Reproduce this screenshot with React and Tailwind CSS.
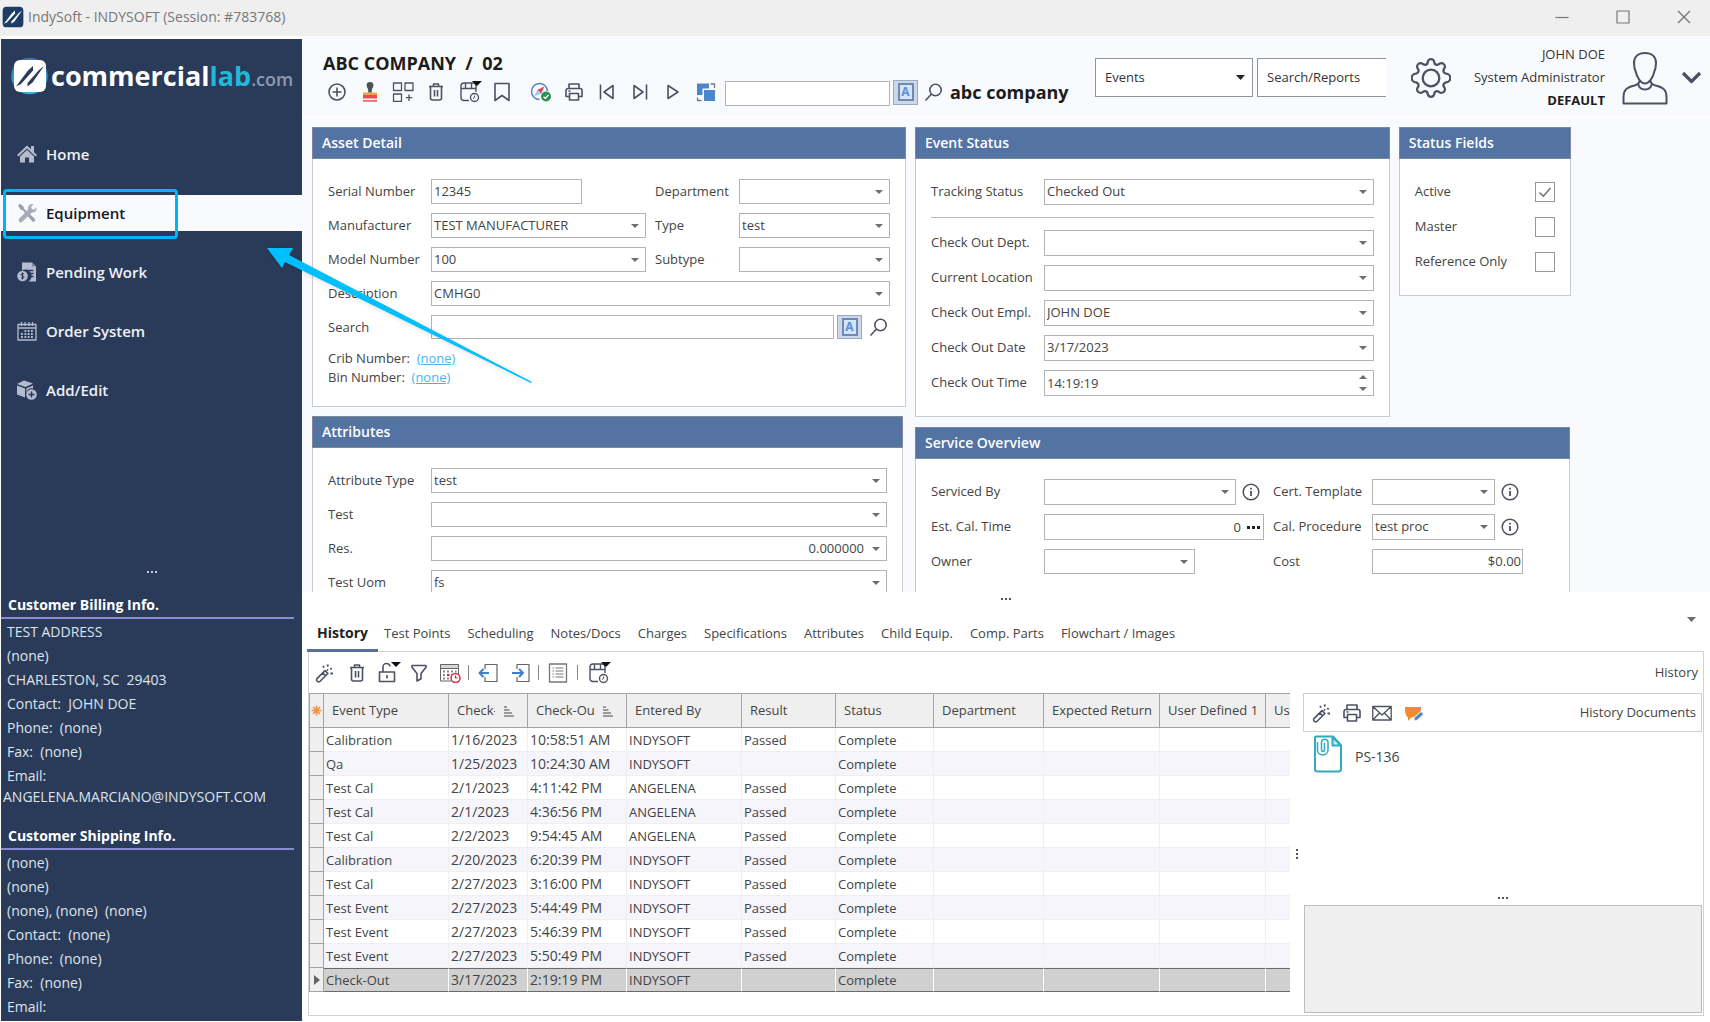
import React from "react";

const LINE = "#4e5064";

/* ---------- icons ---------- */

function Svg({ w = 20, h = w, vb, className = "", children, stroke = LINE, sw = 1.6 }) {
  return (
    <svg
      width={w}
      height={h}
      viewBox={vb || `0 0 ${w} ${h}`}
      className={`shrink-0 ${className}`}
      fill="none"
      stroke={stroke}
      strokeWidth={sw}
      strokeLinejoin="round"
      aria-hidden="true"
    >
      {children}
    </svg>
  );
}

const PlusCircleIcon = () => (
  <Svg>
    <circle cx="10" cy="10" r="8" />
    <path d="M10 5.500v9M5.500 10h9" />
  </Svg>
);

const StampIcon = () => (
  <Svg stroke="none">
    <path d="M10 0a3.400 3.400 0 0 1 3.400 3.600c0 2-1.600 2.800-1.600 4.600v2.600H8.200V8.200c0-1.800-1.600-2.600-1.600-4.600A3.400 3.400 0 0 1 10 0Z" fill="#4a5358" />
    <path d="M3 10.500h14v3.500H3z" fill="#f7a14b" />
    <path d="M3 13h14v3.500H3z" fill="#ee4a52" />
    <path d="M3 18.200h14v1.500H3z" fill="#ee4a52" />
  </Svg>
);

const GridPlusIcon = () => (
  <Svg w={22} h={20} sw={1.3}>
    <path d="M1.500 1h8v7.500h-8zM13 1h8v7.500h-8zM1.500 12h8v7.500h-8zM17 12.500v6.500M13.800 15.700h6.500" />
  </Svg>
);

const TrashIcon = () => (
  <Svg>
    <path d="M3 4.500h14M7.500 4.500V2h5v2.500" />
    <path d="M4.500 4.500V16a2 2 0 0 0 2 2h7a2 2 0 0 0 2-2V4.500M8.500 8v6.500M11.500 8v6.500" />
  </Svg>
);

const BoxClockIcon = () => (
  <Svg w={24} h={22} sw={1.4}>
    <path d="M11 19.500H6a3 3 0 0 1-3-3V5a3 3 0 0 1 3-3h9a3 3 0 0 1 3 3v6" />
    <path d="M3 7.500h15M7.500 2v5.500M13.500 2v5.500" />
    <circle cx="16.500" cy="16.500" r="4" />
    <path d="M16.700 14.500l-.2 2.200-1.500.8" strokeWidth="1" />
    <path d="M14 0h10l-5 5z" fill="#111" stroke="none" />
  </Svg>
);

const BookmarkIcon = () => (
  <Svg>
    <path d="M3 1.500h14v17l-7-5-7 5z" />
  </Svg>
);

const CompassIcon = () => (
  <Svg w={22} h={20}>
    <path d="M9.500 17.500A8 8 0 1 1 17.500 9" stroke="#4c86cf" strokeWidth="1.500" />
    <path d="M13.800 5L7.800 8l3.200 3.200z" fill="#e24040" stroke="#e24040" strokeWidth=".6" />
    <path d="M5.300 13.300L7.800 8l3.200 3.200z" fill="#b9cfe8" stroke="#6e9ad0" strokeWidth=".6" />
    <circle cx="16" cy="14.500" r="5" fill="#2e9150" stroke="none" />
    <path d="M13.600 14.700l1.800 1.700 3.100-3.500" stroke="#fff" strokeWidth="1.400" />
  </Svg>
);

const PrinterIcon = () => (
  <Svg>
    <path d="M5 6.500V2h10v4.500" />
    <path d="M5 14.500H2V8.500a2 2 0 0 1 2-2h12a2 2 0 0 1 2 2v6h-3" />
    <path d="M5.500 11.500h9V18h-9zM4.500 9h2" />
  </Svg>
);

const FirstIcon = () => (
  <Svg>
    <path d="M3.500 2.500v15M16 3.500v13L7 10z" />
  </Svg>
);
const LastIcon = () => (
  <Svg>
    <path d="M16.500 2.500v15M4 3.500v13l9-6.500z" />
  </Svg>
);
const PlayIcon = () => (
  <Svg>
    <path d="M5 3.500v13l10-6.500z" />
  </Svg>
);

const CopyIcon = () => (
  <Svg stroke="none">
    <path d="M1 1.500h12v5H6.500v6.500H1z" fill="#4a86cc" />
    <path d="M8 8h11v11H8z" fill="#4a86cc" />
    <path d="M14.500 2h4v4M1.500 15.500v3h4" stroke="#777" strokeWidth="1.300" />
  </Svg>
);

const LookupIcon = () => (
  <Svg>
    <circle cx="11.500" cy="8" r="5.700" />
    <path d="M7.500 12L1.500 18.500" />
  </Svg>
);

const WandIcon = () => (
  <Svg>
    <path d="M2.200 15.400L10 7.600l2.900 2.900-7.800 7.800a2 2 0 0 1-2.900-2.900zM7.700 9.900l2.900 2.900" />
    <path d="M9 4.500L8 3M13 3.500l-.5-2M15.500 6.500l1-1.500M15.500 10.500h2.500M12 6.500l1 1" strokeWidth="1.900" />
  </Svg>
);

const LockIcon = () => (
  <Svg w={24} h={22}>
    <path d="M2.500 10h15v9.500h-15zM6 10V5.500a3.500 3.500 0 0 1 7-1M10 13v3.500" />
    <path d="M14 0h10l-5 5z" fill="#111" stroke="none" />
  </Svg>
);

const FilterIcon = () => (
  <Svg>
    <path d="M3 2.500h14v1.800L12 10.500v5.300l-4 2.200v-7.500L3 4.300z" />
  </Svg>
);

const CalendarClockIcon = () => (
  <Svg w={22} h={20} stroke="#666" sw={1}>
    <path d="M1.500 18V1.500h18V11M1.500 18H12M1.500 5.500h18" />
    <path d="M1.500 1.500h18v4h-18z" fill="#d6d6d6" />
    <path d="M4 8.500h2M8 8.500h2M12 8.500h2M16 8.500h1.500M4 12h2M12 12h1M4 15.500h2M8 15.500h2" stroke="#888" strokeWidth="1.800" />
    <path d="M8 12h2.500" stroke="#d22b45" strokeWidth="2.200" />
    <circle cx="16.500" cy="15" r="4.500" fill="#fff" stroke="#d22b45" strokeWidth="1.500" />
    <path d="M16.500 12.500V15h2" stroke="#d22b45" strokeWidth="1.200" />
  </Svg>
);

const PageLeftIcon = () => (
  <Svg stroke="#666" sw={1.2}>
    <path d="M7 6V1.500h12v17H7V14" />
    <path d="M11 10H1.500M5.500 6L1.500 10l4 4" stroke="#3c7fcc" strokeWidth="2" />
  </Svg>
);
const PageRightIcon = () => (
  <Svg stroke="#666" sw={1.2}>
    <path d="M6 6V1.500h12v17H6V14" />
    <path d="M1 10h10.500M8 6l4 4-4 4" stroke="#3c7fcc" strokeWidth="2" />
  </Svg>
);
const ListIcon = () => (
  <Svg stroke="#777" sw={1.3}>
    <path d="M1.500 1h17v18h-17z" />
    <path d="M4.500 5h1.500M4.500 8h1.500M4.500 11h1.500M4.500 14h1.500M7.500 5H15.500M7.500 8H15.500M7.500 11H15.500M7.500 14H15.500" strokeWidth="1" />
  </Svg>
);

const MailIcon = () => (
  <Svg w={20} h={20} sw={1.3}>
    <path d="M.8 3.500h18.400v13.500H.8zM.8 3.500l9.200 8.500 9.200-8.500M.8 17l6.700-7M19.200 17l-6.700-7" />
  </Svg>
);

const NoteEditIcon = () => (
  <Svg stroke="none">
    <path d="M1 4h16v4l-7 6H8l-4 4v-4H3L1 9z" fill="#f28c28" />
    <path d="M10.500 14.500l6.500-6 2.500 2.700-6.500 6-3 .5z" fill="#4a86cc" stroke="#fff" strokeWidth=".7" />
  </Svg>
);

const InfoIcon = () => (
  <Svg w={18}>
    <circle cx="9" cy="9" r="7.800" strokeWidth="1.500" />
    <path d="M9 8v5M9 4.800v1.700" strokeWidth="1.800" />
  </Svg>
);

const SortIcon = () => (
  <Svg w={12} stroke="#808080" sw={1.5}>
    <path d="M1 2h3M1 5h5.500M1 8h8M1 11h10" />
  </Svg>
);

const StarIcon = () => (
  <Svg w={11} stroke="#ef9440" sw={1.6}>
    <path d="M5.500.5v10M.5 5.500h10M2 2l7 7M9 2l-7 7" />
    <circle cx="5.500" cy="5.500" r="2.300" fill="#ef9440" stroke="none" />
  </Svg>
);

const AttachmentDocIcon = () => (
  <Svg w={30} h={38} stroke="#2fabbd" sw={2}>
    <path d="M3 1.500h17l8 9V34a2.500 2.500 0 0 1-2.500 2.500h-21A2.500 2.500 0 0 1 2 34V3a1.500 1.500 0 0 1 1-1.500z" />
    <path d="M19.500 2v8.500H28z" fill="#c4ecf2" />
    <path d="M4.500 7v8c0 6.500 10.500 6.500 10.500 0V7.500c0-4.500-6.500-4.500-6.500 0v7c0 2.500 3 2.500 3 0V8" strokeWidth="1.500" />
  </Svg>
);

const GearIcon = () => (
  <Svg w={40} h={40} vb="0 0 40 40" sw={2.3}>
    <circle cx="20" cy="20" r="8.300" />
    <path d="M16.700 4.500a3.300 3.300 0 0 1 6.600 0c.3 2.200 2.500 3 4.500 1.800a3.300 3.300 0 0 1 5.200 4.600c-1.200 2-.3 4.200 2 4.800a3.300 3.300 0 0 1 0 8.600c-2.300.6-3.200 2.800-2 4.800a3.300 3.300 0 0 1-5.200 4.600c-2-1.200-4.200-.4-4.500 1.800a3.300 3.300 0 0 1-6.600 0c-.3-2.200-2.500-3-4.500-1.800a3.300 3.300 0 0 1-5.200-4.600c1.200-2 .3-4.200-2-4.800a3.300 3.300 0 0 1 0-8.600c2.300-.6 3.200-2.800 2-4.800a3.300 3.300 0 0 1 5.200-4.600c2 1.200 4.200.4 4.500-1.800z" />
  </Svg>
);

const PersonIcon = () => (
  <Svg w={46} h={54} sw={2}>
    <path d="M23 2c7 0 11 4 11 10 0 1-.3 2-.3 3 0 2-.2 3-1.200 5-1.500 7-5.500 12.500-9.500 12.500S15 27 13.500 20c-1-2-1.200-3-1.200-5 0-1-.3-2-.3-3C12 6 16 2 23 2z" />
    <path d="M17.500 29.500c0 3-1.500 4-5 5C4.500 36.500 1.500 39 1.500 46v6.500h43V46c0-7-3-9.500-11-11.500-3.500-1-5-2-5-5" />
    <path d="M16 32.500c1 4.500 4 6 7 6s6-1.500 7-6" />
  </Svg>
);

function LogoMark({ size, bg, fg, halo = false }) {
  return (
    <svg width={size} height={size} viewBox="0 0 34 34" className="shrink-0 overflow-visible" aria-hidden="true">
      {halo && (
        <>
          <defs>
            <linearGradient id="halo" x1="0" y1="0" x2="0" y2="1">
              <stop offset="0" stopColor="#3d6fb5" />
              <stop offset="1" stopColor="#2bb6dc" />
            </linearGradient>
          </defs>
          <circle cx="16.500" cy="17" r="18.300" fill="url(#halo)" />
        </>
      )}
      <rect x="1" y="1" width="32" height="32" rx="6" fill={bg} />
      <path d="M3 27.500L15 11.500L20 7V11.500L8 25Z" fill={fg} />
      <path d="M14.500 27.500V24L26 11L31 7L19.500 23.500Z" fill={fg} />
    </svg>
  );
}

const NAV_GRAY = "#b4bccd";

const HomeIcon = () => (
  <Svg stroke="none">
    <path d="M10 1.500L0 11l1.400 1.500L10 4.500l8.600 8L20 11l-3-2.800V2h-3v3.300z" fill={NAV_GRAY} />
    <path d="M3 12.500l7-6.500 7 6.500V18.500h-5v-5H8v5H3z" fill={NAV_GRAY} />
  </Svg>
);
const ToolsIcon = () => (
  <Svg stroke="none">
    <path d="M1 2.500L3 .8l3.500 2.700.3 2L17.500 15.500c1.500 1.300.3 3.800-1.800 3.300L5.500 7l-2-.5z" fill="#9ca0ae" />
    <path d="M19.500 4.500c.6 3-1.500 5.300-4.500 5L5 19c-2 1.300-4.300-1-3-3L11 6.500C10.500 3 13 .5 16.500 1.200L14 4l1 2 2 .7z" fill="#a9adb9" />
  </Svg>
);
const PendingIcon = () => (
  <Svg stroke="none">
    <path d="M5 .5h10l4 4V19.500H11.500A6 6 0 0 0 5 8.500z" fill={NAV_GRAY} />
    <path d="M15 .5l4 4h-4z" fill="#7f8ba3" />
    <path d="M9.500 8.500h7M11.500 11.500h5M12 14.500h4.500" stroke="#2a3b59" strokeWidth="1.300" />
    <circle cx="5.500" cy="14" r="5.300" fill={NAV_GRAY} />
    <path d="M7 12c-1-1-3-.6-3 .6 0 1.500 3 1 3 2.600 0 1.300-2 1.500-3 .5M5.500 10.500v7" stroke="#2a3b59" strokeWidth="1" />
  </Svg>
);
const CalendarIcon = () => (
  <Svg stroke={NAV_GRAY} sw={1.3}>
    <path d="M1 3.500h18v15.500H1zM1 7h18" />
    <path d="M4.500 1v4M8 1v4M12 1v4M15.500 1v4" />
    <path d="M7.500 10h1.800M10.700 10h1.800M14 10h1.800M4 13h1.800M7.500 13h1.800M10.700 13h1.800M14 13h1.800M4 16h1.800M7.500 16h1.800M10.700 16h1.800M14 16h1.800" strokeWidth="2" />
  </Svg>
);
const BoxPlusIcon = () => (
  <Svg stroke="none">
    <path d="M0 4l7-3.500L16 3.500 8.500 7z" fill={NAV_GRAY} />
    <path d="M0 5.500l8 3v9L0 14.500z" fill={NAV_GRAY} />
    <path d="M9.300 8.500L16 5.500v3a6 6 0 0 0-6.700 4z" fill={NAV_GRAY} />
    <circle cx="14.500" cy="14.500" r="5.300" fill={NAV_GRAY} />
    <path d="M14.500 11.500v6M11.500 14.500h6" stroke="#2a3b59" strokeWidth="1.500" />
  </Svg>
);

function Caret({ className = "w-2 h-1", fill = "#6e6e6e" }) {
  return (
    <svg viewBox="0 0 8 4" preserveAspectRatio="none" className={`shrink-0 ${className}`} fill={fill} aria-hidden="true">
      <path d="M0 0h8L4 4z" />
    </svg>
  );
}

function Dots({ vertical = false, color = "bg-[#555555]" }) {
  return (
    <div className={`flex gap-[2px] ${vertical ? "flex-col" : ""}`}>
      {[0, 1, 2].map((i) => (
        <span key={i} className={`size-[2px] ${color}`} />
      ))}
    </div>
  );
}

/* ---------- form controls ---------- */

const FIELD = "w-full h-full rounded-none border border-[#b3b3b3] bg-white pl-[2px] text-[13px] text-[#444444] outline-none";

function Combo({ id, label, value = "", right = false, className = "" }) {
  return (
    <div className={`relative ${className}`}>
      <select
        id={id}
        aria-label={label}
        defaultValue={value}
        className={`${FIELD} appearance-none pr-[22px] ${right ? "[text-align-last:right]" : ""}`}
      >
        <option value={value}>{value}</option>
      </select>
      <Caret className="pointer-events-none absolute right-[7px] top-1/2 -mt-[2px] h-1 w-2" />
    </div>
  );
}

function Text({ id, label, value = "", className = "", inner = "" }) {
  return (
    <div className={className}>
      <input id={id} aria-label={label} type="text" defaultValue={value} className={`${FIELD} pb-px ${inner}`} />
    </div>
  );
}

function Label({ id, children }) {
  return (
    <label htmlFor={id} className="self-center whitespace-nowrap">
      {children}
    </label>
  );
}

function Card({ title, className = "", children }) {
  return (
    <section className={`border border-[#c9ccd1] bg-white text-[13px] text-[#444444] ${className}`}>
      <h2 className="-mx-px -mt-px flex h-8 items-center border border-[#7d8795] bg-[#5373a3] px-[9px] pb-px text-[14px] font-semibold text-white">
        {title}
      </h2>
      {children}
    </section>
  );
}

function MatchButton() {
  return (
    <button
      type="button"
      aria-label="Match case"
      className="flex h-full w-[25px] shrink-0 items-center justify-center border border-[#9aa9c6] bg-[#ccd7ea]"
    >
      <span className="flex h-[18px] w-4 items-center justify-center border-2 border-[#7288ac] bg-[#d4e4fa] text-[12px] font-bold leading-none text-[#5a8fd6]">
        A
      </span>
    </button>
  );
}

function IconButton({ label, className = "w-[33px]", children }) {
  return (
    <button type="button" aria-label={label} title={label} className={`flex h-full shrink-0 items-center justify-center ${className}`}>
      {children}
    </button>
  );
}

/* ---------- regions ---------- */

function TitleBar() {
  return (
    <header className="flex h-9 shrink-0 items-center bg-[#efefef] pb-[3px] pl-[2px] text-[14px] text-[#777777]">
      <LogoMark size={22} bg="#1d3d66" fg="#ffffff" />
      <span className="ml-[4px]">IndySoft - INDYSOFT (Session: #783768)</span>
      <div className="ml-auto mr-[-4px] flex h-full items-center">
        <IconButton label="Minimize" className="w-[61px]">
          <Svg w={14} stroke="#777" sw={1.2}><path d="M.5 7.500h13" /></Svg>
        </IconButton>
        <IconButton label="Maximize" className="w-[61px]">
          <Svg w={14} stroke="#777" sw={1.2}><path d="M1 1h12v12H1z" /></Svg>
        </IconButton>
        <IconButton label="Close" className="w-[61px]">
          <Svg w={14} stroke="#777" sw={1.4}><path d="M1 1l12 12M13 1L1 13" /></Svg>
        </IconButton>
      </div>
    </header>
  );
}

const NAV = [
  ["Home", HomeIcon],
  ["Equipment", ToolsIcon],
  ["Pending Work", PendingIcon],
  ["Order System", CalendarIcon],
  ["Add/Edit", BoxPlusIcon],
];

function InfoBlock({ title, lines, className = "" }) {
  return (
    <section className={className}>
      <h3 className="mb-px mr-2 h-[26px] border-b-2 border-[#8a8ad6] pl-[7px] text-[14px] font-bold leading-6 text-white">{title}</h3>
      {lines.map((l, i) => (
        <p key={i} className="whitespace-pre pl-[6px] leading-6">
          {l}
        </p>
      ))}
    </section>
  );
}

function Sidebar() {
  return (
    <aside className="ml-px mt-[3px] mb-px flex w-[301px] shrink-0 flex-col bg-[#2a3b59] text-[14px] text-[#dfe3ec]">
      <div className="flex h-[97px] items-start pl-3 pt-[20px]">
        <LogoMark size={34} bg="#ffffff" fg="#2a3b59" halo />
        <div className="ml-[4px] flex items-baseline font-bold leading-[34px]">
          <span className="text-[27px] text-white">commercial</span>
          <span className="text-[27px] text-[#22b8dd]">lab</span>
          <span className="text-[18px] font-semibold text-[#8b9bb3]">.com</span>
        </div>
      </div>
      <nav className="flex flex-col gap-[23px]">
        {NAV.map(([name, Icon]) => {
          const active = name === "Equipment";
          return (
            <a
              key={name}
              href="#"
              className={`relative -ml-px flex h-9 items-center pl-[17px] text-[15px] font-semibold ${
                active ? "bg-[#f9fafd] text-[#16181d]" : "text-[#eef1f7]"
              }`}
            >
              <Icon />
              <span className="ml-[9px]">{name}</span>
              {active && <span className="absolute -bottom-[8px] -top-[6px] left-[3px] w-[175px] rounded-[4px] border-[3px] border-[#00b4f5]" />}
            </a>
          );
        })}
      </nav>
      <div className="mt-auto flex justify-center pb-5">
        <Dots color="bg-[#c5ccda]" />
      </div>
      <InfoBlock
        title="Customer Billing Info."
        lines={["TEST ADDRESS", "(none)", "CHARLESTON, SC  29403", "Contact:  JOHN DOE", "Phone:  (none)", "Fax:  (none)", "Email:"]}
      />
      <p className="pl-[2px] leading-[17px]">ANGELENA.MARCIANO@INDYSOFT.COM</p>
      <InfoBlock
        className="mt-[19px] pb-[2px]"
        title="Customer Shipping Info."
        lines={["(none)", "(none)", "(none), (none)  (none)", "Contact:  (none)", "Phone:  (none)", "Fax:  (none)", "Email:"]}
      />
    </aside>
  );
}

function PageHeader() {
  return (
    <div className="flex h-[82px] shrink-0 border-b-2 border-white bg-[#f9fafd]">
      <div className="min-w-0 pt-[15px]">
        <h1 className="whitespace-pre pl-[21px] text-[18px] font-bold leading-6 text-[#1c1c1c]">ABC COMPANY  /  02</h1>
        <div className="mt-[4px] flex h-[26px] items-center pl-[18px]">
          <IconButton label="New"><PlusCircleIcon /></IconButton>
          <IconButton label="Stamp"><StampIcon /></IconButton>
          <IconButton label="Add to layout"><GridPlusIcon /></IconButton>
          <IconButton label="Delete"><TrashIcon /></IconButton>
          <IconButton label="Schedule" className="w-[33px] pl-[2px]"><BoxClockIcon /></IconButton>
          <IconButton label="Bookmark"><BookmarkIcon /></IconButton>
          <IconButton label="Verify" className="ml-[6px] w-[33px]"><CompassIcon /></IconButton>
          <IconButton label="Print"><PrinterIcon /></IconButton>
          <IconButton label="First"><FirstIcon /></IconButton>
          <IconButton label="Last"><LastIcon /></IconButton>
          <IconButton label="Run"><PlayIcon /></IconButton>
          <IconButton label="Copy"><CopyIcon /></IconButton>
          <Text label="Find company" className="ml-[3px] h-[25px] w-[165px]" />
          <div className="ml-[3px] h-[25px]"><MatchButton /></div>
          <IconButton label="Look up" className="ml-[6px] w-5"><LookupIcon /></IconButton>
          <span className="ml-[6px] whitespace-nowrap text-[18px] font-bold text-[#1c1c1c]">abc company</span>
        </div>
      </div>
      <div className="ml-auto flex items-start pr-2 text-[13px] text-[#333333]">
        <div className="relative mt-[22px] h-[39px] w-[158px]">
          <select aria-label="Search scope" className="h-full w-full appearance-none rounded-none border border-[#8f949b] bg-white pl-[9px] text-[13px]">
            <option>Events</option>
          </select>
          <Caret className="pointer-events-none absolute right-[8px] top-[17px] h-[5px] w-[9px]" fill="#222" />
        </div>
        <input
          aria-label="Search/Reports"
          placeholder="Search/Reports"
          className="ml-1 mt-[22px] h-[39px] w-[129px] border border-r-0 border-[#8f949b] bg-white pb-[2px] pl-[9px] text-[13px] placeholder:text-[#333333]"
        />
        <button type="button" aria-label="Settings" className="ml-[25px] mt-[22px]"><GearIcon /></button>
        <div className="w-[154px] pt-[7px] text-right leading-[23px]">
          <div>JOHN DOE</div>
          <div>System Administrator</div>
          <div className="font-bold text-[#1c1c1c]">DEFAULT</div>
        </div>
        <div className="ml-[17px] mt-[15px]"><PersonIcon /></div>
        <button type="button" aria-label="User menu" className="ml-[13px] mt-[31px]">
          <Svg w={21} sw={3.2}><path d="M2 6l8.500 8.500L19 6" /></Svg>
        </button>
      </div>
    </div>
  );
}

function AssetDetail() {
  return (
    <Card title="Asset Detail">
      <div className="px-[15px] pb-[19px] pt-5">
        <div className="grid auto-rows-[25px] grid-cols-[103px_minmax(0,1fr)_84px_151px] gap-y-[9px]">
          <Label id="serial">Serial Number</Label>
          <Text id="serial" value="12345" className="w-[151px]" />
          <Label id="dept">Department</Label>
          <Combo id="dept" />
          <Label id="manu">Manufacturer</Label>
          <Combo id="manu" value="TEST MANUFACTURER" className="mr-[9px]" />
          <Label id="type">Type</Label>
          <Combo id="type" value="test" />
          <Label id="model">Model Number</Label>
          <Combo id="model" value="100" className="mr-[9px]" />
          <Label id="subtype">Subtype</Label>
          <Combo id="subtype" />
          <Label id="desc">Description</Label>
          <Combo id="desc" value="CMHG0" className="col-span-3" />
          <Label id="asearch">Search</Label>
          <div className="col-span-3 flex h-6">
            <Text id="asearch" className="mr-[3px] grow" />
            <MatchButton />
            <IconButton label="Search assets" className="ml-[6px] w-[22px]"><LookupIcon /></IconButton>
          </div>
        </div>
        <p className="mt-[9px] whitespace-pre leading-[19px]">
          Crib Number:  <a href="#" className="text-[#4db3e6] underline">(none)</a>
        </p>
        <p className="whitespace-pre leading-[19px]">
          Bin Number:  <a href="#" className="text-[#4db3e6] underline">(none)</a>
        </p>
      </div>
    </Card>
  );
}

function Attributes() {
  return (
    <Card title="Attributes" className="mr-[3px]">
      <div className="grid auto-rows-[25px] grid-cols-[103px_minmax(0,1fr)] gap-y-[9px] px-[15px] py-5">
        <Label id="atype">Attribute Type</Label>
        <Combo id="atype" value="test" />
        <Label id="atest">Test</Label>
        <Combo id="atest" />
        <Label id="ares">Res.</Label>
        <Combo id="ares" value="0.000000" right />
        <Label id="auom">Test Uom</Label>
        <Combo id="auom" value="fs" />
      </div>
    </Card>
  );
}

function EventStatus() {
  const rows = [
    ["Check Out Dept.", ""],
    ["Current Location", ""],
    ["Check Out Empl.", "JOHN DOE"],
    ["Check Out Date", "3/17/2023"],
  ];
  return (
    <Card title="Event Status">
      <div className="px-[15px] pb-5 pt-5">
        <div className="grid h-[26px] grid-cols-[113px_minmax(0,1fr)]">
          <Label id="track">Tracking Status</Label>
          <Combo id="track" value="Checked Out" />
        </div>
        <hr className="my-3 border-[#b8b8b8]" />
        <div className="grid auto-rows-[26px] grid-cols-[113px_minmax(0,1fr)] gap-y-[9px]">
          {rows.map(([name, value], i) => (
            <React.Fragment key={name}>
              <Label id={`ev${i}`}>{name}</Label>
              <Combo id={`ev${i}`} value={value} />
            </React.Fragment>
          ))}
          <Label id="evtime">Check Out Time</Label>
          <div className="relative">
            <Text id="evtime" value="14:19:19" className="h-full" />
            <div className="absolute inset-y-0 right-[7px] flex flex-col items-center justify-center gap-[8px]">
              <Caret className="h-1 w-2 rotate-180" />
              <Caret className="h-1 w-2" />
            </div>
          </div>
        </div>
      </div>
    </Card>
  );
}

function StatusFields() {
  return (
    <Card title="Status Fields">
      <div className="flex flex-col gap-[15px] px-[15px] py-[23px]">
        {[["Active", true], ["Master", false], ["Reference Only", false]].map(([name, on]) => (
          <label key={name} className="flex h-5 items-center justify-between">
            {name}
            <span className="relative flex size-5">
              <input type="checkbox" defaultChecked={on} className="size-5 appearance-none border border-[#999999] bg-white" />
              {on && (
                <Svg w={14} className="pointer-events-none absolute left-[3px] top-[3px]" stroke="#777">
                  <path d="M1.500 7.500l3.800 3.800L12.500 3" />
                </Svg>
              )}
            </span>
          </label>
        ))}
      </div>
    </Card>
  );
}

function ServiceOverview() {
  return (
    <Card title="Service Overview" className="mr-px min-h-[190px]">
      <div className="grid auto-rows-[26px] grid-cols-[113px_minmax(0,1fr)_99px_182px] gap-y-[9px] px-[15px] pt-5">
        <Label id="svby">Serviced By</Label>
        <div className="mr-[9px] flex gap-[6px]">
          <Combo id="svby" className="grow" />
          <IconButton label="Serviced by info" className="w-[22px] pr-1"><InfoIcon /></IconButton>
        </div>
        <Label id="cert">Cert. Template</Label>
        <div className="flex gap-[6px]">
          <Combo id="cert" className="w-[123px]" />
          <IconButton label="Template info" className="w-[18px]"><InfoIcon /></IconButton>
        </div>
        <Label id="est">Est. Cal. Time</Label>
        <div className="relative mr-[9px]">
          <Text id="est" value="0" className="h-full" inner="pr-[22px] text-right" />
          <button type="button" aria-label="Edit time" className="absolute inset-y-0 right-1 flex items-center gap-[2px]">
            <span className="size-[3px] bg-[#222222]" />
            <span className="size-[3px] bg-[#222222]" />
            <span className="size-[3px] bg-[#222222]" />
          </button>
        </div>
        <Label id="proc">Cal. Procedure</Label>
        <div className="flex gap-[6px]">
          <Combo id="proc" value="test proc" className="w-[123px]" />
          <IconButton label="Procedure info" className="w-[18px]"><InfoIcon /></IconButton>
        </div>
        <Label id="owner">Owner</Label>
        <Combo id="owner" className="h-[25px] w-[151px]" />
        <Label id="cost">Cost</Label>
        <Text id="cost" value="$0.00" className="h-[25px] w-[151px]" inner="pr-[1px] text-right" />
      </div>
    </Card>
  );
}

const TABS = ["Test Points", "Scheduling", "Notes/Docs", "Charges", "Specifications", "Attributes", "Child Equip.", "Comp. Parts", "Flowchart / Images"];

const ROWS = [
  ["Calibration", "1/16/2023", "10:58:51 AM", "INDYSOFT", "Passed"],
  ["Qa", "1/25/2023", "10:24:30 AM", "INDYSOFT", ""],
  ["Test Cal", "2/1/2023", "4:11:42 PM", "ANGELENA", "Passed"],
  ["Test Cal", "2/1/2023", "4:36:56 PM", "ANGELENA", "Passed"],
  ["Test Cal", "2/2/2023", "9:54:45 AM", "ANGELENA", "Passed"],
  ["Calibration", "2/20/2023", "6:20:39 PM", "INDYSOFT", "Passed"],
  ["Test Cal", "2/27/2023", "3:16:00 PM", "INDYSOFT", "Passed"],
  ["Test Event", "2/27/2023", "5:44:49 PM", "INDYSOFT", "Passed"],
  ["Test Event", "2/27/2023", "5:46:39 PM", "INDYSOFT", "Passed"],
  ["Test Event", "2/27/2023", "5:50:49 PM", "INDYSOFT", "Passed"],
  ["Check-Out", "3/17/2023", "2:19:19 PM", "INDYSOFT", ""],
];

const HEAD = [
  ["Event Type"],
  ["Check-Out", "w-[38px]"],
  ["Check-Out ", "w-[58px]"],
  ["Entered By"],
  ["Result"],
  ["Status"],
  ["Department"],
  ["Expected Return"],
  ["User Defined 1"],
  ["User Defined 2"],
];

function HistoryTable() {
  return (
    <table className="w-[1067px] table-fixed border-separate border-spacing-0 whitespace-nowrap text-left text-[13px] text-[#444444]">
      <colgroup>
        <col className="w-[15px]" />
        <col className="w-[125px]" />
        <col className="w-[79px]" />
        <col className="w-[99px]" />
        <col className="w-[115px]" />
        <col className="w-[94px]" />
        <col className="w-[98px]" />
        <col className="w-[110px]" />
        <col className="w-[116px]" />
        <col className="w-[106px]" />
        <col className="w-[110px]" />
      </colgroup>
      <thead>
        <tr className="h-[35px] bg-[#efefef]">
          <th className="border border-[#a3a3a3] p-0">
            <div className="flex justify-center"><StarIcon /></div>
          </th>
          {HEAD.map(([name, clip]) => (
            <th key={name} className="border-y border-r border-[#a3a3a3] p-0 pl-2 font-normal">
              {clip ? (
                <div className="flex items-center gap-[8px]">
                  <span className={`shrink-0 overflow-hidden ${clip}`}>{name}</span>
                  <SortIcon />
                </div>
              ) : (
                name
              )}
            </th>
          ))}
        </tr>
      </thead>
      <tbody>
        {ROWS.map((r, i) => {
          const selected = i === ROWS.length - 1;
          const cell = selected
            ? "border-y border-r border-y-[#6a6a6a] border-r-white bg-[#d0d0d0]"
            : `border-b border-r border-[#efeff2] ${i % 2 ? "bg-[#f5f5fb]" : "bg-white"}`;
          return (
            <tr key={i} className="h-6">
              <td className="border-x border-b border-[#a3a3a3] bg-[#efefef] p-0">
                {selected && (
                  <svg width="6" height="10" viewBox="0 0 6 10" className="ml-[4px]" fill="#666" aria-hidden="true">
                    <path d="M0 0l6 5-6 5z" />
                  </svg>
                )}
              </td>
              {[...r, "Complete", "", "", "", ""].map((v, j) => (
                <td key={j} className={`p-0 pl-[2px] leading-5 ${j === 1 || j === 2 ? "text-[14px]" : ""} ${cell}`}>
                  {v}
                </td>
              ))}
            </tr>
          );
        })}
      </tbody>
    </table>
  );
}

function Separator({ className = "" }) {
  return <span className={`h-[15px] w-px shrink-0 bg-[#8a8a8a] ${className}`} />;
}

function HistoryPane() {
  return (
    <div className="flex min-h-0 grow flex-col bg-white text-[13px] text-[#444444]">
      <div className="flex h-[14px] shrink-0 items-center justify-center"><Dots /></div>
      <div className="flex h-[45px] shrink-0 items-end pl-[5px]" role="tablist">
        <button type="button" role="tab" aria-selected="true" className="relative -mb-px h-[37px] w-[71px] border-b-[3px] border-[#55709f] text-center text-[14px] font-bold text-[#222222]">
          History
        </button>
        <div className="ml-[6px] flex gap-[17px]">
          {TABS.map((t) => (
            <button key={t} type="button" role="tab" aria-selected="false" className="h-[35px] whitespace-nowrap">
              {t}
            </button>
          ))}
        </div>
        <button type="button" aria-label="More tabs" className="mb-auto ml-auto mr-[14px] mt-[11px] flex"><Caret className="h-[5px] w-[9px]" /></button>
      </div>
      <div className="mb-[6px] ml-[6px] mr-[6px] flex min-h-0 grow flex-col border border-[#d2d2d2]">
        <div className="flex h-[41px] shrink-0 items-center pr-[5px]">
          <IconButton label="Edit event" className="w-8"><WandIcon /></IconButton>
          <IconButton label="Delete event" className="w-[31px]"><TrashIcon /></IconButton>
          <IconButton label="Unlock" className="w-[33px]"><LockIcon /></IconButton>
          <IconButton label="Filter" className="w-[27px]"><FilterIcon /></IconButton>
          <IconButton label="Date range" className="w-9"><CalendarClockIcon /></IconButton>
          <Separator />
          <IconButton label="Check in" className="w-[38px]"><PageLeftIcon /></IconButton>
          <IconButton label="Check out" className="w-[27px]"><PageRightIcon /></IconButton>
          <Separator className="ml-[4px]" />
          <IconButton label="List" className="w-[38px]"><ListIcon /></IconButton>
          <Separator />
          <IconButton label="Schedule" className="w-[42px]"><BoxClockIcon /></IconButton>
          <span className="ml-auto">History</span>
        </div>
        <div className="flex min-h-0 grow">
          <div className="min-w-0 grow overflow-hidden">
            <HistoryTable />
          </div>
          <div className="flex w-[13px] shrink-0 items-center justify-center"><Dots vertical /></div>
          <div className="mr-px flex w-[399px] shrink-0 flex-col">
            <div className="flex h-[39px] shrink-0 items-center border border-[#cfcfcf] pl-[2px] pr-[5px]">
              <IconButton label="Edit document" className="w-[31px]"><WandIcon /></IconButton>
              <IconButton label="Print document" className="w-[30px]"><PrinterIcon /></IconButton>
              <IconButton label="Email document" className="w-[30px]"><MailIcon /></IconButton>
              <IconButton label="Annotate" className="w-[33px]"><NoteEditIcon /></IconButton>
              <span className="ml-auto">History Documents</span>
            </div>
            <div className="mt-[3px] flex items-center gap-[12px] pl-[10px]">
              <AttachmentDocIcon />
              <span className="pt-[4px] text-[14px]">PS-136</span>
            </div>
            <div className="mt-auto flex h-[14px] items-center justify-center"><Dots /></div>
            <div className="mb-[2px] ml-px h-[108px] border border-[#bdbdbd] bg-[#efefef]" />
          </div>
        </div>
      </div>
    </div>
  );
}

function PointerArrow() {
  return (
    <svg width="272" height="142" viewBox="0 0 272 142" className="pointer-events-none absolute left-[264px] top-[244px] z-10 drop-shadow-sm" aria-hidden="true">
      <path d="M3 4H29L25 11L268 138L267 139L21 18L18 24z" fill="#00bfff" />
    </svg>
  );
}

export default function App() {
  return (
    <div className="relative flex h-screen flex-col overflow-hidden bg-white font-['Open_Sans','Noto_Sans',sans-serif]">
      <TitleBar />
      <div className="flex min-h-0 grow">
        <Sidebar />
        <main className="flex min-w-0 grow flex-col">
          <PageHeader />
          <div className="h-[474px] shrink-0 overflow-hidden bg-[#f9fafd] pl-[10px] pt-[9px]">
            <div className="grid grid-cols-[594fr_656fr_130fr] items-start gap-x-[9px]">
              <div className="flex flex-col gap-[9px]">
                <AssetDetail />
                <Attributes />
              </div>
              <div className="flex flex-col gap-[10px]">
                <div className="grid grid-cols-[474fr_172fr] items-start gap-x-[9px]">
                  <EventStatus />
                  <StatusFields />
                </div>
                <ServiceOverview />
              </div>
            </div>
          </div>
          <HistoryPane />
        </main>
      </div>
      <PointerArrow />
    </div>
  );
}
